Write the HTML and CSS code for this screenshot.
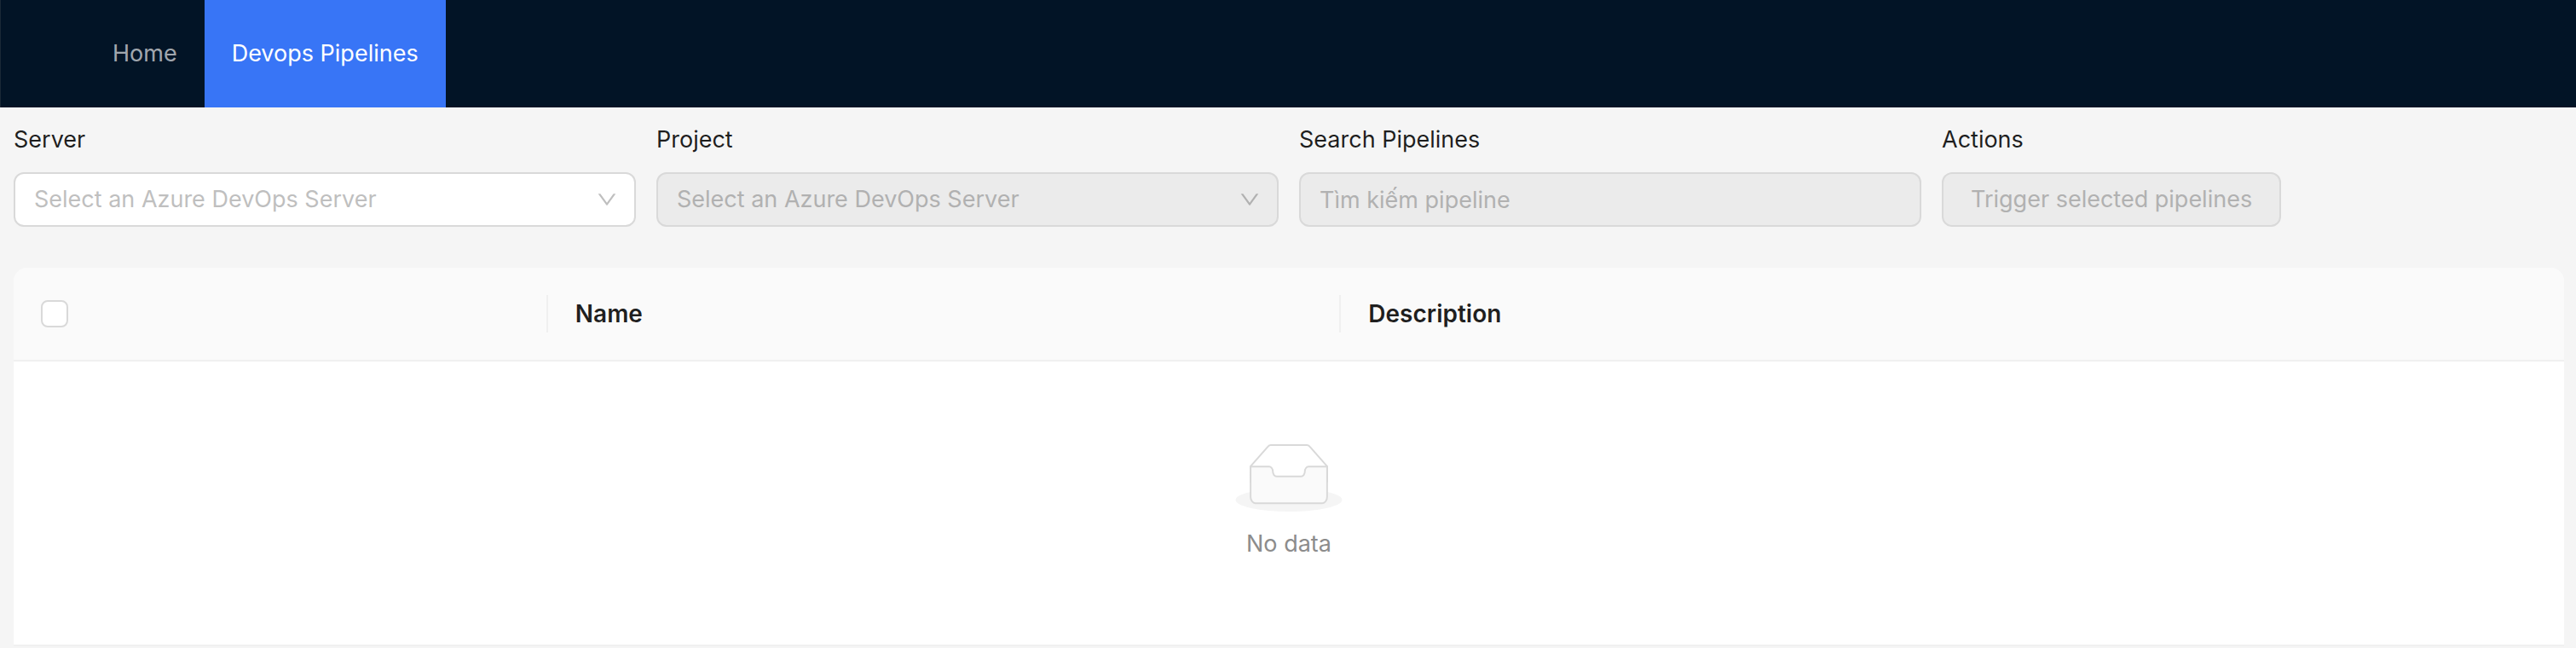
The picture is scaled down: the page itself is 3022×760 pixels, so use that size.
FILE: index.html
```html
<!DOCTYPE html>
<html lang="en">
<head>
<meta charset="utf-8">
<title>Devops Pipelines</title>
<link rel="stylesheet" href="styles.css">
</head>
<body>
<header class="header">
  <nav class="menu">
    <a class="menu-item" href="#">Home</a>
    <a class="menu-item menu-item-selected" href="#" aria-current="page">Devops Pipelines</a>
  </nav>
</header>
<main class="content">
  <form class="filters">
    <div class="field">
      <label class="label" for="server">Server</label>
      <div class="select-box">
        <select class="control" id="server"><option>Select an Azure DevOps Server</option></select>
        <svg class="arrow" viewBox="64 64 896 896" aria-hidden="true"><path d="M884 256h-75c-5.100 0-9.900 2.500-12.900 6.600L512 654.200 227.900 262.600c-3-4.100-7.800-6.600-12.900-6.600h-75c-6.500 0-10.300 7.400-6.500 12.700l352.600 486.100c12.800 17.600 39 17.600 51.700 0l352.600-486.100c3.900-5.300.1-12.700-6.400-12.700z"/></svg>
      </div>
    </div>
    <div class="field">
      <label class="label" for="project">Project</label>
      <div class="select-box">
        <select class="control" id="project" disabled><option>Select an Azure DevOps Server</option></select>
        <svg class="arrow arrow-disabled" viewBox="64 64 896 896" aria-hidden="true"><path d="M884 256h-75c-5.100 0-9.900 2.500-12.900 6.600L512 654.200 227.900 262.600c-3-4.100-7.800-6.600-12.900-6.600h-75c-6.500 0-10.300 7.400-6.500 12.700l352.600 486.100c12.800 17.600 39 17.600 51.700 0l352.600-486.100c3.900-5.300.1-12.700-6.400-12.700z"/></svg>
      </div>
    </div>
    <div class="field">
      <label class="label" for="search">Search Pipelines</label>
      <input class="control" id="search" type="text" placeholder="Tìm kiếm pipeline" disabled>
    </div>
    <div class="field">
      <label class="label" for="trigger">Actions</label>
      <button class="control button" id="trigger" type="button" disabled>Trigger selected pipelines</button>
    </div>
  </form>
  <table class="table">
    <thead>
      <tr>
        <th class="head-cell col-select"><div class="head-inner"><input class="checkbox" type="checkbox" aria-label="Select all"></div></th>
        <th class="head-cell col-name"><div class="head-inner">Name</div></th>
        <th class="head-cell"><div class="head-inner">Description</div></th>
      </tr>
    </thead>
    <tbody>
      <tr>
        <td class="empty-cell" colspan="3">
          <div class="empty">
            <svg class="empty-image" viewBox="0 0 64 41" aria-hidden="true">
              <g transform="translate(0 1)" fill="none" fill-rule="evenodd">
                <ellipse fill="#f5f5f5" cx="32" cy="33" rx="32" ry="7"/>
                <g fill-rule="nonzero" stroke="#d9d9d9">
                  <path fill="#fff" d="M55 12.760 44.854 1.258C44.367.474 43.656 0 42.907 0H21.093c-.749 0-1.460.474-1.947 1.257L9 12.761V22h46v-9.240z"/>
                  <path fill="#fafafa" d="M41.613 15.931c0-1.605.994-2.930 2.227-2.931H55v18.137C55 33.260 53.680 35 52.050 35h-40.100C10.320 35 9 33.259 9 31.137V13h11.160c1.233 0 2.227 1.323 2.227 2.928v.022c0 1.605 1.005 2.901 2.237 2.901h14.752c1.232 0 2.237-1.308 2.237-2.913v-.007z"/>
                </g>
              </g>
            </svg>
            <div class="empty-text">No data</div>
          </div>
        </td>
      </tr>
    </tbody>
  </table>
</main>
</body>
</html>
```
FILE: styles.css
```css
* {
  box-sizing: border-box;
}

body {
  margin: 0;
  background: #f5f5f5;
  color: rgba(0, 0, 0, 0.88);
  font-family: Inter, "Liberation Sans", sans-serif;
  font-size: 27px;
  line-height: 44px;
}

.header {
  padding-left: 99px;
  border-left: 1px solid #1a2936;
  background: #021426;
}

.menu {
  display: flex;
}

.menu-item {
  padding: 0 32px;
  color: rgba(255, 255, 255, 0.65);
  line-height: 126px;
  text-decoration: none;
}

.menu-item-selected {
  background: #3875f6;
  color: #fff;
}

.content {
  padding: 16px 14px 0 16px;
}

.filters {
  display: grid;
  grid-template-columns: repeat(4, 1fr);
  gap: 24px;
  margin-bottom: 48px;
}

.field {
  display: flex;
  flex-direction: column;
  align-items: flex-start;
  gap: 16px;
}

.label {
  display: block;
}

.select-box {
  position: relative;
  width: 100%;
}

.control {
  display: block;
  width: 100%;
  height: 64px;
  padding: 0 22px;
  border: 2px solid #d9d9d9;
  border-radius: 12px;
  background: #fff;
  color: #bfbfbf;
  font: inherit;
  appearance: none;
}

.control:disabled {
  background: #ebebeb;
  color: #b1b1b1;
  opacity: 1;
}

.control::placeholder {
  color: #b1b1b1;
}

.button {
  width: auto;
  padding: 0 32px;
}

.arrow {
  position: absolute;
  top: 20px;
  right: 22px;
  width: 24px;
  height: 24px;
  fill: #bfbfbf;
  pointer-events: none;
}

.arrow-disabled {
  fill: #b1b1b1;
}

.table {
  width: 100%;
  border-spacing: 0;
  table-layout: fixed;
  background: #fff;
  border-radius: 16px 16px 0 0;
}

.col-select {
  width: 20.95%;
}

.col-name {
  width: 31.1%;
}

.head-cell {
  padding: 32px 0;
  border-bottom: 2px solid #f0f0f0;
  background: #fafafa;
  font-size: 28px;
  font-weight: 600;
  text-align: left;
}

.head-cell:first-child {
  border-top-left-radius: 16px;
}

.head-cell:last-child {
  border-top-right-radius: 16px;
}

.head-inner {
  display: flex;
  align-items: center;
  height: 44px;
  padding: 0 32px;
  border-right: 2px solid #f0f0f0;
}

.head-cell:last-child .head-inner {
  border-right: 0;
}

.checkbox {
  width: 32px;
  height: 32px;
  margin: 0;
  border: 2px solid #d9d9d9;
  border-radius: 8px;
  background: #fff;
  appearance: none;
}

.empty-cell {
  padding: 32px;
  border-bottom: 2px solid #f0f0f0;
}

.empty {
  display: flex;
  flex-direction: column;
  align-items: center;
  gap: 16px;
  padding: 64px 0;
}

.empty-image {
  width: 128px;
  height: 80px;
}

.empty-text {
  color: #8c8c8c;
}
```
